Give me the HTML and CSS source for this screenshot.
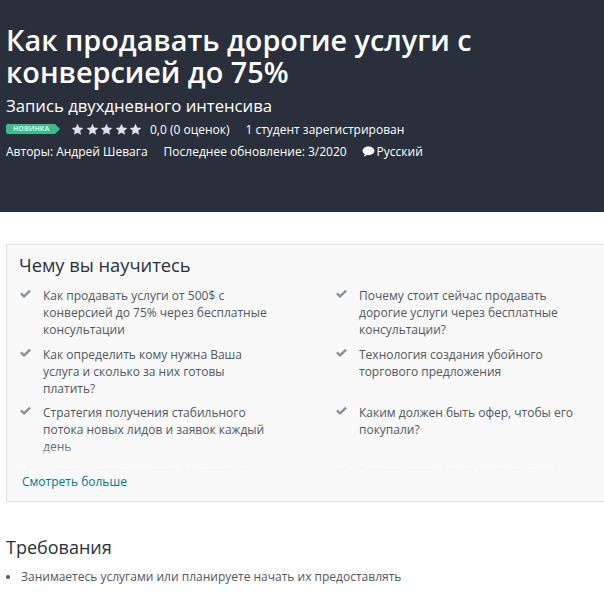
FILE: index.html
```html
<!DOCTYPE html>
<html lang="ru">
<head>
<meta charset="utf-8">
<title>Курс</title>
<link rel="stylesheet" href="styles.css">
</head>
<body>
<header class="hero">
  <h1 class="title">Как продавать дорогие услуги с конверсией до 75%</h1>
  <p class="subtitle">Запись двухдневного интенсива</p>
  <div class="rating-row">
    <span class="badge">новинка</span>
    <span class="stars">
      <svg class="star" viewBox="0 0 24 24"><path d="M12 1.500l3.200 7 7.600.8-5.700 5.100 1.600 7.500L12 18l-6.700 3.900 1.600-7.500L1.200 9.300l7.600-.8z"/></svg>
      <svg class="star" viewBox="0 0 24 24"><path d="M12 1.500l3.200 7 7.600.8-5.700 5.100 1.600 7.500L12 18l-6.700 3.900 1.600-7.500L1.200 9.300l7.600-.8z"/></svg>
      <svg class="star" viewBox="0 0 24 24"><path d="M12 1.500l3.200 7 7.600.8-5.700 5.100 1.600 7.500L12 18l-6.700 3.900 1.600-7.500L1.200 9.300l7.600-.8z"/></svg>
      <svg class="star" viewBox="0 0 24 24"><path d="M12 1.500l3.200 7 7.600.8-5.700 5.100 1.600 7.500L12 18l-6.700 3.900 1.600-7.500L1.200 9.300l7.600-.8z"/></svg>
      <svg class="star" viewBox="0 0 24 24"><path d="M12 1.500l3.200 7 7.600.8-5.700 5.100 1.600 7.500L12 18l-6.700 3.900 1.600-7.500L1.200 9.300l7.600-.8z"/></svg>
    </span>
    <span class="score">0,0 (0 оценок)</span>
    <span>1 студент зарегистрирован</span>
  </div>
  <div class="meta-row">
    <span>Авторы: Андрей Шевага</span>
    <span>Последнее обновление: 3/2020</span>
    <span class="lang">
      <svg class="bubble" viewBox="0 0 14 12"><path d="M7 .5c3.600 0 6.500 2.100 6.500 4.700S10.600 9.900 7 9.900c-.6 0-1.200-.1-1.700-.2C4.300 10.600 3 11.300 1.700 11.500c.7-.8 1.200-1.700 1.300-2.700C1.500 8 .5 6.700.5 5.200.5 2.600 3.400.5 7 .5z"/></svg>
      Русский
    </span>
  </div>
</header>

<section class="learn">
  <h2 class="learn-title">Чему вы научитесь</h2>
  <div class="learn-body">
    <ul class="learn-grid">
      <li class="learn-item"><svg class="check" viewBox="0 0 14 11"><path d="M1 5.800l1.900-1.900 2.500 2.400L11.100.8 13 2.700 5.400 10z"/></svg><span>Как продавать услуги от 500$ с конверсией до 75% через бесплатные консультации</span></li>
      <li class="learn-item"><svg class="check" viewBox="0 0 14 11"><path d="M1 5.800l1.900-1.900 2.500 2.400L11.100.8 13 2.700 5.400 10z"/></svg><span>Почему стоит сейчас продавать дорогие услуги через бесплатные консультации?</span></li>
      <li class="learn-item"><svg class="check" viewBox="0 0 14 11"><path d="M1 5.800l1.900-1.900 2.500 2.400L11.100.8 13 2.700 5.400 10z"/></svg><span>Как определить кому нужна Ваша услуга и сколько за них готовы платить?</span></li>
      <li class="learn-item"><svg class="check" viewBox="0 0 14 11"><path d="M1 5.800l1.900-1.900 2.500 2.400L11.100.8 13 2.700 5.400 10z"/></svg><span>Технология создания убойного торгового предложения</span></li>
      <li class="learn-item"><svg class="check" viewBox="0 0 14 11"><path d="M1 5.800l1.900-1.900 2.500 2.400L11.100.8 13 2.700 5.400 10z"/></svg><span>Стратегия получения стабильного потока новых лидов и заявок каждый день</span></li>
      <li class="learn-item"><svg class="check" viewBox="0 0 14 11"><path d="M1 5.800l1.900-1.900 2.500 2.400L11.100.8 13 2.700 5.400 10z"/></svg><span>Каким должен быть офер, чтобы его покупали?</span></li>
      <li class="learn-item"><svg class="check" viewBox="0 0 14 11"><path d="M1 5.800l1.900-1.900 2.500 2.400L11.100.8 13 2.700 5.400 10z"/></svg><span>Система продаж через бесплатные</span></li>
      <li class="learn-item"><svg class="check" viewBox="0 0 14 11"><path d="M1 5.800l1.900-1.900 2.500 2.400L11.100.8 13 2.700 5.400 10z"/></svg><span>Скрипт проведения консультаций</span></li>
    </ul>
    <div class="fade"></div>
  </div>
  <a class="more" href="#">Смотреть больше</a>
</section>

<section class="reqs">
  <h2 class="reqs-title">Требования</h2>
  <ul class="reqs-list">
    <li>Занимаетесь услугами или планируете начать их предоставлять</li>
  </ul>
</section>
</body>
</html>
```

FILE: styles.css
```css
* { box-sizing: border-box; }
html, body { margin: 0; padding: 0; }
body {
  width: 604px;
  height: 594px;
  overflow: hidden;
  background: #fff;
  font-family: "Open Sans", "Noto Sans", sans-serif;
  color: #29303b;
}
.hero {
  height: 212px;
  background: #29303b;
  color: #fff;
  padding: 24px 6px 0;
  font-size: 12px;
}
.title {
  margin: 0;
  font-size: 28.8px;
  line-height: 32px;
  font-weight: 600;
  width: 490px;
}
.subtitle {
  margin: 5px 0 0;
  font-size: 16.7px;
  line-height: 26px;
}
.rating-row {
  display: flex;
  align-items: center;
  height: 18px;
  margin-top: 1px;
}
.badge {
  position: relative;
  width: 49px;
  height: 10px;
  margin-right: 16px;
  padding-left: 7px;
  background: #3dba8a;
  border-radius: 2px 0 0 2px;
  font-size: 7px;
  line-height: 10px;
  font-weight: 700;
  text-transform: uppercase;
  color: #d6f5e8;
}
.badge::after {
  content: "";
  position: absolute;
  left: 100%;
  top: 0;
  border-left: 5px solid #3dba8a;
  border-top: 5px solid transparent;
  border-bottom: 5px solid transparent;
}
.stars { display: flex; gap: 1.5px; margin-right: 8px; }
.star { width: 13px; height: 13px; fill: #dcdfe6; }
.score { margin-right: 16px; }
.meta-row {
  display: flex;
  align-items: center;
  gap: 16px;
  height: 24px;
  margin-top: 1px;
}
.lang { display: flex; align-items: center; gap: 2px; margin-left: -1px; }
.bubble { width: 13px; height: 11px; fill: #fff; }

.learn {
  margin: 32px 0 0 6px;
  height: 258px;
  background: #f9f9f9;
  border: 1px solid #dedfe0;
  border-right: 0;
  padding: 7px 0 0 12px;
}
.learn-title {
  margin: 0;
  font-size: 18.3px;
  line-height: 26px;
  font-weight: 500;
  color: #29303b;
}
.learn-body {
  position: relative;
  height: 186px;
  margin-top: 9px;
  overflow: hidden;
}
.learn-grid {
  list-style: none;
  margin: 0;
  padding: 0;
  display: grid;
  grid-template-columns: 316px 259px;
}
.learn-item {
  display: flex;
  gap: 12px;
  padding-right: 57px;
  font-size: 12px;
  line-height: 17px;
  color: #505763;
  margin-bottom: 7.6px;
}
.learn-item span { flex: 1; }
.learn-item:nth-child(even) { padding-right: 0; }
.check {
  flex: none;
  width: 13px;
  height: 10px;
  margin-top: 2px;
  margin-right: -1px;
  fill: #8a9097;
}
.fade {
  position: absolute;
  left: 0; right: 0; bottom: 0;
  height: 28px;
  background: linear-gradient(to bottom, rgba(249,249,249,0), rgba(249,249,249,.82) 45%, rgba(249,249,249,.92) 75%, #f9f9f9);
}
.more {
  display: block;
  margin-left: 3px;
  font-size: 12px;
  line-height: 17px;
  color: #007791;
  text-decoration: none;
}
.reqs { padding: 32px 6px 0; }
.reqs-title {
  margin: 0;
  font-size: 18px;
  line-height: 26px;
  font-weight: 500;
  color: #29303b;
}
.reqs-list {
  margin: 8px 0 0;
  padding: 0 0 0 15px;
  font-size: 12px;
  line-height: 17px;
  color: #505763;
}
```
